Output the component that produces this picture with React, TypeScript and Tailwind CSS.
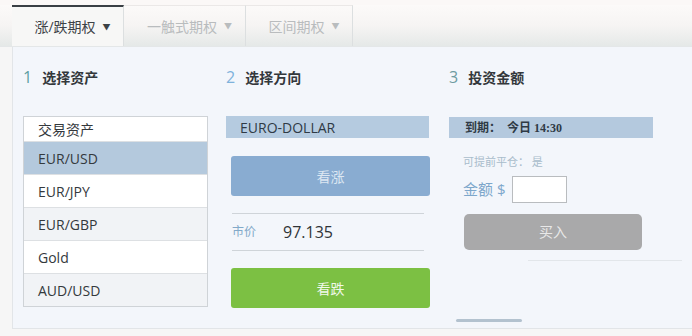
import React from "react";

const font = { fontFamily: '"Open Sans", "Noto Sans CJK SC", sans-serif' };

function Tab({ label, active, w }: { label: string; active?: boolean; w: string }) {
  return (
    <div
      className={`${w} h-full flex items-center justify-center gap-[7px] pl-[10px] border-r border-[#dcdfe0] ${
        active ? "text-[#3d4246] border-t-2 border-t-[#3a3f44] bg-[#f7f7f6]" : "text-[#b9bcbe] border-t border-t-[#ebe8e7]"
      }`}
    >
      <span className="text-[14px]">{label}</span>
      <span className="text-[8px]">▼</span>
    </div>
  );
}

function Heading({ n, text, color }: { n: string; text: string; color: string }) {
  return (
    <div className="h-[18px] flex items-center gap-[10px]">
      <span className={`text-[16px] ${color}`}>{n}</span>
      <span className="text-[14px] font-bold text-[#33383c]">{text}</span>
    </div>
  );
}

export default function App() {
  const rows = [
    { t: "EUR/USD", bg: "bg-[#b4c9dd]" },
    { t: "EUR/JPY", bg: "bg-white" },
    { t: "EUR/GBP", bg: "bg-[#f1f3f6]" },
    { t: "Gold", bg: "bg-white" },
    { t: "AUD/USD", bg: "bg-[#f1f3f6]" },
  ];
  return (
    <div className="w-[692px] h-[336px] bg-[#f6f6f6] overflow-hidden flex flex-col" style={font}>
      <div className="h-[5px] bg-[#fbf8f7] shrink-0" />
      <div className="h-[42px] shrink-0 flex pl-[12px] bg-gradient-to-b from-[#fcfaf9] via-[#f6f4f3] to-[#e5e9e8] border-b border-[#e4e7e8]">
        <Tab label="涨/跌期权" active w="w-[112px]" />
        <Tab label="一触式期权" w="w-[122px]" />
        <Tab label="区间期权" w="w-[107px]" />
      </div>
      <div className="ml-[12px] h-[282px] shrink-0 flex bg-[#f3f6fb] border-l border-b border-[#e2e5e8]">
        {/* col 1 */}
        <div className="w-[203px] pl-[10px] pt-[21px] flex flex-col">
          <Heading n="1" text="选择资产" color="text-[#5d9ea2]" />
          <div className="mt-[30px] w-[185px] border border-[#cfd3d7] bg-white">
            <div className="h-[24px] flex items-center pl-[14px] text-[14px] text-[#33383c]">交易资产</div>
            {rows.map((r) => (
              <div
                key={r.t}
                className={`h-[33px] flex items-center pl-[14px] text-[14px] text-[#34393d] border-t border-[#dde0e3] ${r.bg}`}
              >
                {r.t}
              </div>
            ))}
          </div>
        </div>
        {/* col 2 */}
        <div className="w-[222px] pl-[10px] pt-[21px] flex flex-col">
          <Heading n="2" text="选择方向" color="text-[#7eb2db]" />
          <div className="mt-[30px] w-[203px] h-[22px] bg-[#b5cbe0] flex items-center pl-[14px] text-[14px] text-[#2f3a45]">
            EURO-DOLLAR
          </div>
          <div className="mt-[18px] ml-[5px] w-[199px] h-[40px] rounded-[3px] bg-[#89acd1] flex items-center justify-center text-[14px] text-[#dce7f2]">
            看涨
          </div>
          <div className="mt-[17px] ml-[6px] w-[192px] h-[38px] border-t border-b border-[#cfd4d9] flex items-center">
            <span className="text-[12px] text-[#82a9c9] w-[51px]">市价</span>
            <span className="text-[16px] text-[#2f3438]">97.135</span>
          </div>
          <div className="mt-[17px] ml-[5px] w-[199px] h-[40px] rounded-[3px] bg-[#7cc043] flex items-center justify-center text-[14px] text-[#f0f8ea]">
            看跌
          </div>
        </div>
        {/* col 3 */}
        <div className="flex-1 pl-[11px] pt-[21px] flex flex-col">
          <Heading n="3" text="投资金额" color="text-[#6e9ba1]" />
          <div
            className="mt-[31px] w-[204px] h-[21px] bg-[#b4c9de] flex items-center pl-[16px] text-[12px] font-bold text-[#2f3a45]"
            style={{ fontFamily: '"Liberation Serif", "Noto Sans CJK SC", serif' }}
          >
            到期：&nbsp;&nbsp;今日 14:30
          </div>
          <div className="mt-[16px] ml-[14px] text-[11px] text-[#a9bccb]">可提前平仓：&nbsp;是</div>
          <div className="mt-[5px] ml-[14px] flex items-center h-[27px]">
            <span className="text-[15px] text-[#7da7cb]">金额 $</span>
            <div className="ml-[7px] w-[55px] h-[27px] bg-white border border-[#b9bcbf]" />
          </div>
          <div className="mt-[11px] ml-[15px] w-[178px] h-[36px] rounded-[5px] bg-[#a9a9aa] flex items-center justify-center text-[14px] text-[#e8e8e8]">
            买入
          </div>
          <div className="mt-[10px] ml-[79px] w-[154px] h-px bg-[#e2e6ea]" />
          <div className="mt-[58px] ml-[7px] w-[66px] h-[3px] bg-[#b3c2cf] rounded-sm" />
        </div>
      </div>
    </div>
  );
}
